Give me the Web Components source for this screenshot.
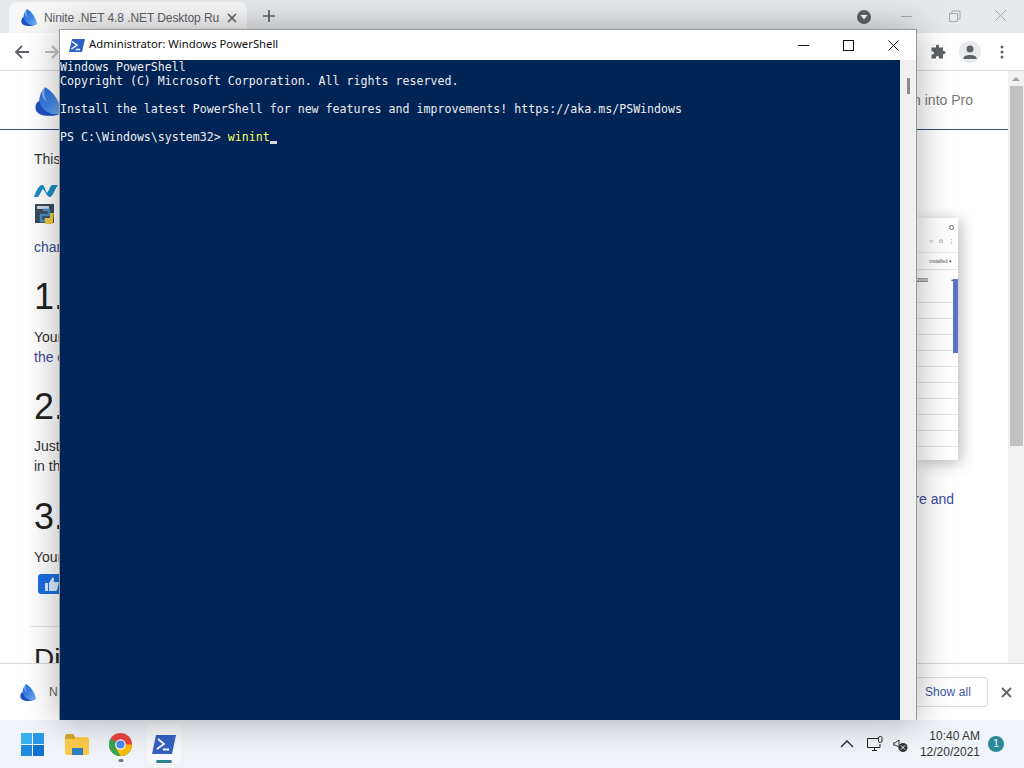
<!DOCTYPE html>
<html lang="en">
<head>
<meta charset="utf-8">
<title>Ninite .NET 4.8 .NET Desktop Runtime</title>
<style>
	html, body { margin: 0; padding: 0; width: 1024px; height: 768px; overflow: hidden; background: #fff; }
</style>
</head>
<body>
<win-desktop>
	<chrome-window>
		<ninite-page></ninite-page>
	</chrome-window>
	<ps-window slot="over"></ps-window>
	<win-taskbar slot="bar"></win-taskbar>
</win-desktop>

<script>
let sailCount = 0;

class NiniteSail extends HTMLElement {
	constructor() {
		super();
		const shadow = this.attachShadow({mode: 'open'});
		const gradId = 'sail' + (sailCount++);
		shadow.innerHTML = `<style>
			:host { display: inline-block; width: 16px; height: 17px; line-height: 0; }
			svg { width: 100%; height: 100%; display: block; }
			</style>
			<svg viewBox="0 0 32 34">
				<defs><linearGradient id="${gradId}" x1="0" y1="0" x2="1" y2="1"><stop offset="0" stop-color="#2a63d6"/><stop offset=".55" stop-color="#3f86e6"/><stop offset="1" stop-color="#7db4f2"/></linearGradient></defs>
				<path fill="#1f4fc0" d="M5 16 C1 18 0 23 1 27 C2 31 8 34 17 34 C24 34 30 32 32 29 C24 31 12 28 5 16Z"/>
				<path fill="url(#${gradId})" d="M12 0 C20 4 28 14 32 29 C31 31 27 32 22 32 C14 31 7 25 5 16 C5 10 8 4 12 0Z"/>
				<path fill="#9cc4f5" d="M12 0 C10 6 11 12 14 17 C10 15 8 11 8 7 C9 4 10 2 12 0Z" opacity=".75"/>
			</svg>`;
	}
}
customElements.define('ninite-sail', NiniteSail);

class WinDesktop extends HTMLElement {
	constructor() {
		super();
		const shadow = this.attachShadow({mode: 'open'});
		shadow.innerHTML = `<style>
			:host { display: grid; grid-template-rows: 720px 48px; width: 1024px; height: 768px; position: relative; overflow: hidden; font-family: "Liberation Sans", Arial, sans-serif; }
			.main { display: block; min-height: 0; }
			</style>
			<div class="main"><slot></slot></div>
			<slot name="bar"></slot>
			<slot name="over"></slot>`;
	}
}
customElements.define('win-desktop', WinDesktop);

class ChromeWindow extends HTMLElement {
	constructor() {
		super();
		const shadow = this.attachShadow({mode: 'open'});
		shadow.innerHTML = `<style>
			:host { display: flex; flex-direction: column; height: 720px; background: #fff; }
			.strip { height: 33px; flex: none; background: #e6e9ec; display: flex; align-items: flex-end; padding-left: 9px; box-sizing: border-box; }
			.tab { width: 238px; height: 31px; background: #f7f7f8; border-radius: 8px 8px 0 0; display: flex; align-items: center; padding: 0 0 0 12px; box-sizing: border-box; margin-bottom: 0; }
			.tab span { width: 174px; margin-left: 7px; flex: none; font-size: 12px; letter-spacing: -.08px; color: #5f6368; white-space: nowrap; }
			.tab svg { flex: none; margin-left: 9px; }
			.plus { margin: 0 0 11px 16px; line-height: 0; }
			.spacer { flex: 1; }
			.caps { display: flex; align-items: center; height: 33px; padding-bottom: 2px; box-sizing: border-box; }
			.caps svg { display: block; }
			.toolbar { height: 38px; flex: none; background: #fff; border-bottom: 1px solid #dadce0; box-sizing: border-box; display: flex; align-items: center; padding: 0 14px; }
			.toolbar svg { display: block; flex: none; }
			.body { flex: 1; min-height: 0; display: flex; }
			.view { flex: 1; min-width: 0; overflow: hidden; }
			.scroll { width: 16px; flex: none; background: #f1f1f1; display: flex; flex-direction: column; align-items: center; }
			.scroll i { display: block; width: 0; height: 0; border: 4px solid transparent; border-top: 0; border-bottom: 4px solid #a3a3a3; margin: 6px 0 5px; }
			.scroll b { display: block; width: 13px; height: 360px; background: #c1c1c1; }
			.shelf { height: 57px; flex: none; background: #fff; border-top: 1px solid #d9d9d9; box-sizing: border-box; display: flex; align-items: center; padding: 0 12px 0 20px; }
			.shelf span { font-size: 12px; color: #5f6368; margin-left: 13px; }
			.showall { height: 30px; width: 80px; box-sizing: border-box; border: 1px solid #dadce0; border-radius: 4px; font-size: 12px; letter-spacing: .1px; color: #3c5aa6; display: flex; align-items: center; justify-content: center; margin-right: 13px; background: #fff; }
			</style>
			<div class="strip">
				<div class="tab">
					<ninite-sail></ninite-sail>
					<span>Ninite .NET 4.8 .NET Desktop Ru</span>
					<svg width="10" height="10" viewBox="0 0 10 10"><path d="M1 1 L9 9 M9 1 L1 9" stroke="#5f6368" stroke-width="1.7"/></svg>
				</div>
				<svg class="plus" width="12" height="12" viewBox="0 0 12 12"><path d="M6 0 V12 M0 6 H12" stroke="#5f6368" stroke-width="1.7"/></svg>
				<div class="spacer"></div>
				<div class="caps">
					<svg width="14" height="14" viewBox="0 0 14 14" style="margin-right:30px;margin-top:2px"><circle cx="7" cy="7" r="7" fill="#5f6368"/><path d="M3.6 5 H10.4 L7 9.6Z" fill="#fff"/></svg>
					<svg width="12" height="12" viewBox="0 0 12 12" style="margin-right:36px"><path d="M0 6.500 H11" stroke="#a8abae"/></svg>
					<svg width="12" height="12" viewBox="0 0 12 12" style="margin-right:33px"><path d="M.5 3.500 H8.500 V11.500 H.5Z M3 3.500 V1 H11 V9 H8.500" fill="none" stroke="#a8abae"/></svg>
					<svg width="13" height="13" viewBox="0 0 13 13" style="margin-right:17px"><path d="M1 1 L12 12 M12 1 L1 12" stroke="#a8abae"/></svg>
				</div>
			</div>
			<div class="toolbar">
				<svg width="15" height="14" viewBox="0 0 15 14"><path d="M15 7 H2 M8 1 L2 7 L8 13" fill="none" stroke="#5f6368" stroke-width="1.8"/></svg>
				<svg width="15" height="14" viewBox="0 0 15 14" style="margin-left:16px"><path d="M0 7 H13 M7 1 L13 7 L7 13" fill="none" stroke="#bcbfc3" stroke-width="1.8"/></svg>
				<div class="spacer"></div>
				<svg width="16" height="16" viewBox="0 0 16 16" style="margin-right:13px"><path fill="#5f6368" d="M6 1.500 C6 .5 9 .5 9 1.500 V3.500 H13 V7 H14 C16 7 16 10 14 10 H13 V14.500 H9 V13.500 C9 11.500 6 11.500 6 13.500 V14.500 H1.500 V10.500 H2.500 C4.500 10.500 4.500 7.500 2.500 7.500 H1.500 V3.500 H6Z"/></svg>
				<svg width="22" height="22" viewBox="0 0 22 22" style="margin-right:19px"><circle cx="11" cy="11" r="11" fill="#e8eaed"/><circle cx="11" cy="8" r="3.500" fill="#5f6368"/><path d="M4.500 17 C4.500 13 17.500 13 17.500 17 V18 H4.500Z" fill="#5f6368"/></svg>
				<svg width="4" height="14" viewBox="0 0 4 14" style="margin-right:6px"><circle cx="2" cy="2" r="1.500" fill="#5f6368"/><circle cx="2" cy="7" r="1.500" fill="#5f6368"/><circle cx="2" cy="12" r="1.500" fill="#5f6368"/></svg>
			</div>
			<div class="body">
				<div class="view"><slot></slot></div>
				<div class="scroll"><i></i><b></b></div>
			</div>
			<div class="shelf">
				<ninite-sail></ninite-sail>
				<span>N</span>
				<div class="spacer" style="flex:1"></div>
				<div class="showall">Show all</div>
				<svg width="11" height="11" viewBox="0 0 11 11"><path d="M1 1 L10 10 M10 1 L1 10" stroke="#5f6368" stroke-width="1.800"/></svg>
			</div>`;
	}
}
customElements.define('chrome-window', ChromeWindow);

class NinitePage extends HTMLElement {
	constructor() {
		super();
		const shadow = this.attachShadow({mode: 'open'});

		let rows = '';
		for(let i = 0; i < 10; i++)
			rows += '<div class="row"></div>';

		shadow.innerHTML = `<style>
			:host { display: block; height: 592px; overflow: hidden; background: #fff; font-size: 14px; line-height: 20px; color: #333; }
			a { color: #3d4b9c; text-decoration: none; }
			.nav { height: 59px; box-sizing: border-box; border-bottom: 1px solid #3a4a80; display: flex; align-items: center; justify-content: space-between; padding: 0 35px 0 35px; }
			.nav ninite-sail { width: 27px; height: 29px; margin-top: 2px; }
			.nav span { font-size: 14px; color: #777; margin-top: -1px; }
			.cols { display: flex; justify-content: space-between; }
			.left { padding: 19px 0 0 34px; width: 200px; }
			.left p { margin: 0; }
			.logos { display: flex; flex-direction: column; gap: 7px; margin: 16px 0 12px 0; }
			.logos svg { display: block; }
			h2 { font-weight: normal; font-size: 36px; line-height: 40px; margin: 0; color: #222; }
			.step { margin: 20px 0 0 0; padding-top: 0; }
			.step h2 + p { margin-top: 10px; }
			.two h2 + p { margin-top: 9px; }
			.three { margin-top: 21px; }
			.like { width: 60px; height: 20px; background: #1a6fe0; border-radius: 3px; margin: 7px 0 0 4px; padding-left: 7px; box-sizing: border-box; display: flex; align-items: center; }
			hr { border: 0; border-top: 1px solid #e5e5e5; margin: 32px 0 0 -4px; width: 120px; }
			.did { font-size: 28px; line-height: 32px; margin-top: 16px; color: #222; }
			.right { width: 91px; padding-top: 88px; box-sizing: border-box; display: flex; flex-direction: column; }
			.shot { width: 41px; height: 242px; flex: none; box-sizing: border-box; background: #fff; box-shadow: 3px 3px 16px rgba(0,0,0,.28); position: relative; font-size: 5px; line-height: 6px; color: #555; overflow: hidden; }
			.head { height: 16px; display: flex; justify-content: flex-end; align-items: flex-end; padding-right: 4px; }
			.head i { display: block; width: 3px; height: 3px; border: 1px solid #666; border-radius: 50%; margin-bottom: 4px; margin-top: 0; }
			.tools { height: 14px; display: flex; justify-content: flex-end; align-items: center; gap: 6px; padding-right: 4px; color: #777; }
			.drop { height: 18px; margin-top: 4px; border-top: 1px solid #eee; border-bottom: 1px solid #e4e4e4; display: flex; align-items: center; justify-content: flex-end; padding-right: 6px; box-sizing: border-box; }
			.val { height: 33px; display: flex; align-items: flex-start; justify-content: space-between; padding: 7px 5px 0 0; color: #222; border-bottom: 1px solid #e4e4e4; box-sizing: border-box; }
			.row { height: 16px; border-bottom: 1px solid #e4e4e4; box-sizing: border-box; }
			.bar { position: absolute; right: 0; top: 61px; width: 5px; height: 74px; background: #5b74c8; }
			.more { margin: 29px 0 0 0; width: 37px; display: flex; justify-content: flex-end; white-space: nowrap; }
			</style>
			<div class="nav"><ninite-sail></ninite-sail><span>n into Pro</span></div>
			<div class="cols">
				<div class="left">
					<p>This</p>
					<div class="logos">
						<svg width="24" height="12" viewBox="0 0 24 12"><path d="M0 12 C3 3 6 0 8 0 C11 0 11 6 13 8 C15 6 16 1 18 0 H24 C21 3 19 12 16 12 C13 12 11 6 9 4 C7 6 6 10 4 12Z" fill="#1c8cc8"/></svg>
						<svg width="23" height="21" viewBox="0 0 23 21"><rect x="1" y="0" width="19" height="19" fill="#3a4a60"/><rect x="3" y="2" width="12" height="3" fill="#c9d5e4"/><path d="M9 6 H15 V11 H7 V17 H12 V15 H10" fill="none" stroke="#4b8bbe" stroke-width="2.500"/><path d="M20 9 H16 V14 H11 V20 H19 V16" fill="#f2c93f"/></svg>
					</div>
					<a>char</a>
					<div class="step"><h2>1.</h2><p>Your</p><a>the c</a></div>
					<div class="step two"><h2>2.</h2><p>Just</p>in th</div>
					<div class="step three"><h2>3.</h2><p>Your</p>
						<div class="like"><svg width="14" height="14" viewBox="0 0 14 14"><path fill="#d8ecff" d="M0 6 H3 V14 H0Z M4 6 L7 1 C8 0 9.500 1 9 3 L8.500 5 H13 C14 5 14 7 13.500 7.500 L12 13 C12 13.500 11 14 10.500 14 H4Z"/></svg></div>
					</div>
					<hr>
					<div class="did">Dic</div>
				</div>
				<div class="right">
					<div class="shot">
						<div class="head"><i></i></div>
						<div class="tools"><span>☆</span><span>⊡</span><span>⋮</span></div>
						<div class="drop">installed ▾</div>
						<div class="val"><span>2000</span><span>•</span></div>
						${rows}
						<div class="bar"></div>
					</div>
					<a class="more">re and</a>
				</div>
			</div>`;
	}
}
customElements.define('ninite-page', NinitePage);

class PsWindow extends HTMLElement {
	constructor() {
		super();
		const shadow = this.attachShadow({mode: 'open'});
		shadow.innerHTML = `<style>
			:host { display: flex; flex-direction: column; position: absolute; left: 59px; top: 29px; width: 858px; height: 691px; box-sizing: border-box; border: 1px solid #9a9a9a; border-bottom: 0; background: #f0f0f0; box-shadow: 0 0 34px rgba(0,0,0,.32); }
			.title { height: 30px; flex: none; background: #fff; display: flex; align-items: center; padding-left: 9px; font: 11.3px "Noto Sans", "Liberation Sans", sans-serif; color: #111; }
			.title svg { display: block; flex: none; }
			.title span { margin: -3px 0 0 4px; flex: 1; }
			.ctl { width: 45px; display: flex; justify-content: center; }
			.body { flex: 1; min-height: 0; display: flex; }
			.console { width: 840px; background: #012456; color: #eeedf0; font: 11.62px/14px "DejaVu Sans Mono", "Liberation Mono", monospace; white-space: pre; box-sizing: border-box; overflow: hidden; }
			.console div { height: 14px; }
			.y { color: #ffff66; }
			.cur { display: inline-block; width: 7px; height: 3px; background: #d8d8d8; vertical-align: baseline; margin-bottom: -3px; }
			.side { flex: 1; position: relative; background: #f0f0f0; }
			.side i { position: absolute; right: 6px; top: 18px; width: 3px; height: 16px; background: #8a8a8a; }
			</style>
			<div class="title">
				<svg width="16" height="13" viewBox="0 0 16 13"><path d="M3 0 H16 L13 13 H0Z" fill="#2f62c4"/><path d="M3 2.500 L8 6 L2.500 10 M7 10.500 H11" fill="none" stroke="#fff" stroke-width="1.500"/></svg>
				<span>Administrator: Windows PowerShell</span>
				<div class="ctl"><svg width="11" height="11" viewBox="0 0 11 11"><path d="M0 5.500 H11" stroke="#111"/></svg></div>
				<div class="ctl"><svg width="11" height="11" viewBox="0 0 11 11"><rect x=".5" y=".5" width="10" height="10" fill="none" stroke="#111"/></svg></div>
				<div class="ctl" style="margin-right:0"><svg width="11" height="11" viewBox="0 0 11 11"><path d="M.5 .5 L10.500 10.500 M10.500 .5 L.5 10.500" stroke="#111"/></svg></div>
			</div>
			<div class="body">
				<div class="console">
					<div>Windows PowerShell</div>
					<div>Copyright (C) Microsoft Corporation. All rights reserved.</div>
					<div></div>
					<div>Install the latest PowerShell for new features and improvements! https://aka.ms/PSWindows</div>
					<div></div>
					<div><span>PS C:\\Windows\\system32&gt; </span><span class="y">winint</span><span class="cur"></span></div>
				</div>
				<div class="side"><i></i></div>
			</div>`;
		// template whitespace between the line divs must not render under white-space: pre
		const consoleElem = shadow.querySelector('.console');
		Array.from(consoleElem.childNodes).forEach(function(node) {
			if(node.nodeType === Node.TEXT_NODE)
				consoleElem.removeChild(node);
		});
	}
}
customElements.define('ps-window', PsWindow);

class WinTaskbar extends HTMLElement {
	constructor() {
		super();
		const shadow = this.attachShadow({mode: 'open'});
		shadow.innerHTML = `<style>
			:host { display: flex; align-items: center; height: 48px; background: #f0f4f9; padding: 0 20px 0 21px; box-sizing: border-box; font: 12px "Liberation Sans", Arial, sans-serif; color: #222; }
			svg { display: block; flex: none; }
			.app { position: relative; display: flex; align-items: center; justify-content: center; flex: none; }
			.mark { position: absolute; left: 50%; bottom: -5px; transform: translateX(-50%); height: 3px; border-radius: 2px; }
			.active { background: #f6f8fb; width: 36px; height: 40px; border-radius: 4px; margin-left: 14px; box-shadow: 0 0 1px rgba(0,0,0,.12); }
			.spacer { flex: 1; }
			.clock { text-align: right; line-height: 16px; margin-left: 12px; color: #333; }
			.badge { width: 16px; height: 16px; border-radius: 50%; background: #2b8a9a; color: #fff; font-size: 10px; line-height: 16px; text-align: center; margin-left: 8px; }
			</style>
			<div class="app">
				<svg width="23" height="23" viewBox="0 0 23 23"><rect width="11" height="11" fill="#39b0ee"/><rect x="12" width="11" height="11" fill="#2a9ae8"/><rect y="12" width="11" height="11" fill="#1f8ae0"/><rect x="12" y="12" width="11" height="11" fill="#1173d0"/></svg>
			</div>
			<div class="app" style="margin-left:21px">
				<svg width="24" height="21" viewBox="0 0 24 21"><path d="M0 2 C0 1 1 0 2 0 H8 L10 3 H22 C23 3 24 4 24 5 V19 C24 20 23 21 22 21 H2 C1 21 0 20 0 19Z" fill="#fbcb4a"/><path d="M0 2 C0 1 1 0 2 0 H8 L10 3 V5 H0Z" fill="#d9a72e"/><path d="M7 14 H18 V21 H7Z" fill="#2f7fc4"/></svg>
			</div>
			<div class="app" style="margin-left:20px">
				<svg width="23" height="23" viewBox="0 0 24 24"><circle cx="12" cy="12" r="12" fill="#e8453c"/><path d="M12 12 L1.600 18 A12 12 0 0 1 1.600 6Z" fill="#34a853"/><path d="M12 12 L22.400 18 A12 12 0 0 1 1.600 18Z" fill="#34a853"/><path d="M12 12 H24 A12 12 0 0 1 12 24 L6.800 15Z" fill="#fbbc05"/><circle cx="12" cy="12" r="5.500" fill="#fff"/><circle cx="12" cy="12" r="4.300" fill="#4a8af0"/></svg>
				<div class="mark" style="width:5px;background:#777;bottom:-6px"></div>
			</div>
			<div class="app active">
				<svg width="24" height="19" viewBox="0 0 24 19"><path d="M4 0 H24 L20 19 H0Z" fill="#3561c4"/><path d="M6 4 L12 9 L5 14 M11 14.500 H17" fill="none" stroke="#fff" stroke-width="1.800"/></svg>
				<div class="mark" style="width:16px;background:#2a7f8e;bottom:1px"></div>
			</div>
			<div class="spacer"></div>
			<svg width="14" height="8" viewBox="0 0 14 8" style="margin-right:13px"><path d="M1 7 L7 1 L13 7" fill="none" stroke="#222" stroke-width="1.300"/></svg>
			<svg width="16" height="16" viewBox="0 0 16 16" style="margin-right:10px"><path d="M.5 2.500 H11 M.5 2.500 V11.500 H13 V8 M5 14.500 H10 M7.500 11.500 V14.500" fill="none" stroke="#222"/><rect x="11.500" y=".5" width="3.500" height="6" rx="1.500" fill="#fff" stroke="#222"/></svg>
			<svg width="15" height="13" viewBox="0 0 15 13" style="margin-right:0;margin-top:3px"><path d="M0 4 H2 L6 1 V8 L2 6 H0Z" fill="none" stroke="#333"/><circle cx="10" cy="8.500" r="4.500" fill="#333"/><path d="M8 6.500 L12 10.500 M12 6.500 L8 10.500" stroke="#fff"/></svg>
			<div class="clock">10:40 AM<br>12/20/2021</div>
			<div class="badge">1</div>`;
	}
}
customElements.define('win-taskbar', WinTaskbar);
</script>
</body>
</html>
